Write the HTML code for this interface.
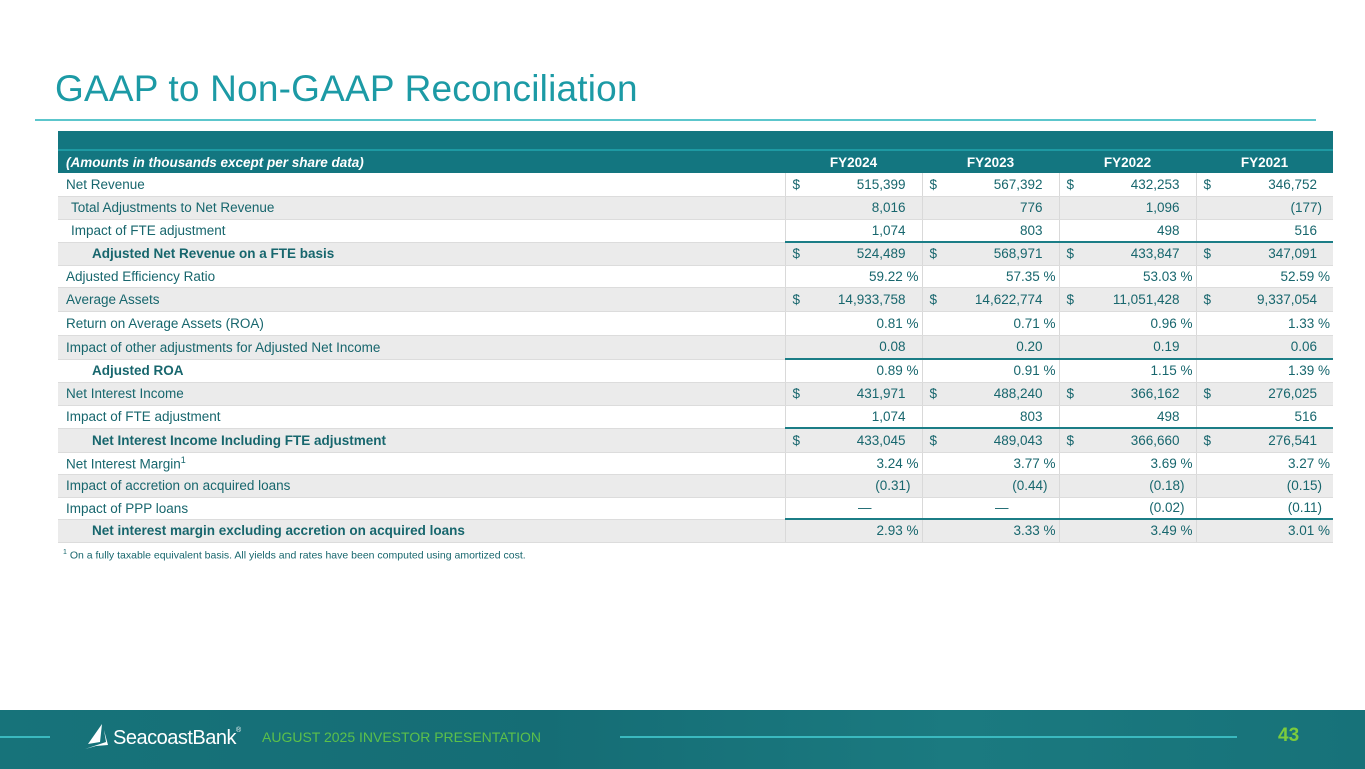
<!DOCTYPE html>
<html><head><meta charset="utf-8"><style>
*{margin:0;padding:0;box-sizing:border-box}
body{width:1365px;height:769px;overflow:hidden;background:#fff;font-family:"Liberation Sans",sans-serif;position:relative;color:#17666d}
.title{position:absolute;left:55px;top:68px;font-size:37px;color:#1c9aa5;letter-spacing:0.2px}
.rule{position:absolute;left:35px;top:119px;width:1281px;height:2px;background:#5cc6cc}
table{position:absolute;left:58px;top:131px;width:1275px;border-collapse:collapse;font-size:13.5px}
td{padding:0 8px;white-space:nowrap;border-left:1px solid #d9d9d9;border-bottom:1px solid #dcdcdc}
td.l{border-left:none;width:727px}
td.n{width:137px;position:relative;text-align:right;padding-right:16px}
td.n span{position:absolute;left:7px}
td.p{padding-right:3px}
tr.g td{background:#ebebeb}
tr.top td{background:#137680;height:19px;border:none}
tr.hd td{background:#137680;color:#fff;font-weight:bold;height:23px;border:none;border-top:2px solid #1e9aa3}
tr.hd td.n{text-align:center;padding:0}
tr.b td.n{border-top:2px solid #1b7d86}
tr.b td.l{font-weight:bold;padding-left:34px}
.i{padding-left:13px!important}
.foot{position:absolute;left:63px;top:549px;font-size:10.5px;color:#17666d}
.band{position:absolute;left:0;top:710px;width:1365px;height:59px;background:linear-gradient(90deg,#17737a,#156d75 40%,#1b7a80 70%,#177279)}
</style></head><body>
<div class="title">GAAP to Non-GAAP Reconciliation</div>
<div class="rule"></div>
<table>
<tr class="top"><td class="l"></td><td class="n"></td><td class="n"></td><td class="n"></td><td class="n"></td></tr>
<tr class="hd"><td class="l"><i>(Amounts in thousands except per share data)</i></td><td class="n">FY2024</td><td class="n">FY2023</td><td class="n">FY2022</td><td class="n">FY2021</td></tr>
<tr style="height:23px"><td class="l">Net Revenue</td><td class="n"><span>$</span>515,399</td><td class="n"><span>$</span>567,392</td><td class="n"><span>$</span>432,253</td><td class="n"><span>$</span>346,752</td></tr>
<tr class="g" style="height:23px"><td class="l i">Total Adjustments to Net Revenue</td><td class="n">8,016</td><td class="n">776</td><td class="n">1,096</td><td class="n" style="padding-right:11px">(177)</td></tr>
<tr style="height:23px"><td class="l i">Impact of FTE adjustment</td><td class="n">1,074</td><td class="n">803</td><td class="n">498</td><td class="n">516</td></tr>
<tr class="g b" style="height:23px"><td class="l">Adjusted Net Revenue on a FTE basis</td><td class="n"><span>$</span>524,489</td><td class="n"><span>$</span>568,971</td><td class="n"><span>$</span>433,847</td><td class="n"><span>$</span>347,091</td></tr>
<tr style="height:22px"><td class="l">Adjusted Efficiency Ratio</td><td class="n p">59.22 %</td><td class="n p">57.35 %</td><td class="n p">53.03 %</td><td class="n p">52.59 %</td></tr>
<tr class="g" style="height:24px"><td class="l">Average Assets</td><td class="n"><span>$</span>14,933,758</td><td class="n"><span>$</span>14,622,774</td><td class="n"><span>$</span>11,051,428</td><td class="n"><span>$</span>9,337,054</td></tr>
<tr style="height:24px"><td class="l">Return on Average Assets (ROA)</td><td class="n p">0.81 %</td><td class="n p">0.71 %</td><td class="n p">0.96 %</td><td class="n p">1.33 %</td></tr>
<tr class="g" style="height:24px"><td class="l">Impact of other adjustments for Adjusted Net Income</td><td class="n">0.08</td><td class="n">0.20</td><td class="n">0.19</td><td class="n">0.06</td></tr>
<tr class="b" style="height:23px"><td class="l">Adjusted ROA</td><td class="n p">0.89 %</td><td class="n p">0.91 %</td><td class="n p">1.15 %</td><td class="n p">1.39 %</td></tr>
<tr class="g" style="height:23px"><td class="l">Net Interest Income</td><td class="n"><span>$</span>431,971</td><td class="n"><span>$</span>488,240</td><td class="n"><span>$</span>366,162</td><td class="n"><span>$</span>276,025</td></tr>
<tr style="height:23px"><td class="l">Impact of FTE adjustment</td><td class="n">1,074</td><td class="n">803</td><td class="n">498</td><td class="n">516</td></tr>
<tr class="g b" style="height:24px"><td class="l">Net Interest Income Including FTE adjustment</td><td class="n"><span>$</span>433,045</td><td class="n"><span>$</span>489,043</td><td class="n"><span>$</span>366,660</td><td class="n"><span>$</span>276,541</td></tr>
<tr style="height:22px"><td class="l">Net Interest Margin<sup style="font-size:9px">1</sup></td><td class="n p">3.24 %</td><td class="n p">3.77 %</td><td class="n p">3.69 %</td><td class="n p">3.27 %</td></tr>
<tr class="g" style="height:23px"><td class="l">Impact of accretion on acquired loans</td><td class="n" style="padding-right:11px">(0.31)</td><td class="n" style="padding-right:11px">(0.44)</td><td class="n" style="padding-right:11px">(0.18)</td><td class="n" style="padding-right:11px">(0.15)</td></tr>
<tr style="height:22px"><td class="l">Impact of PPP loans</td><td class="n" style="padding-right:50px">—</td><td class="n" style="padding-right:50px">—</td><td class="n" style="padding-right:11px">(0.02)</td><td class="n" style="padding-right:11px">(0.11)</td></tr>
<tr class="g b" style="height:23px"><td class="l">Net interest margin excluding accretion on acquired loans</td><td class="n p">2.93 %</td><td class="n p">3.33 %</td><td class="n p">3.49 %</td><td class="n p">3.01 %</td></tr>
</table>
<div class="foot"><sup style="font-size:7px">1</sup> On a fully taxable equivalent basis. All yields and rates have been computed using amortized cost.</div>
<div class="band"></div>
<div style="position:absolute;left:0;top:736px;width:50px;height:2px;background:#3ab9bf"></div>
<div style="position:absolute;left:620px;top:736px;width:617px;height:2px;background:#3ab9bf"></div>
<svg style="position:absolute;left:82px;top:722px" width="30" height="30" viewBox="0 0 30 30"><path d="M20 2 L6 22 L18 20 Z M22 8 L24 20 L3 27 L14 24 L26 23 Z" fill="#fff"/></svg>
<div style="position:absolute;left:113px;top:727px;font-size:20px;color:#fff;letter-spacing:-0.5px">SeacoastBank<span style="font-size:7px;vertical-align:top">®</span></div>
<div style="position:absolute;left:262px;top:729px;font-size:14px;color:#5cc04a">AUGUST 2025 INVESTOR PRESENTATION</div>
<div style="position:absolute;left:1278px;top:725px;font-size:19px;font-weight:bold;color:#7ccc3c">43</div>
</body></html>
